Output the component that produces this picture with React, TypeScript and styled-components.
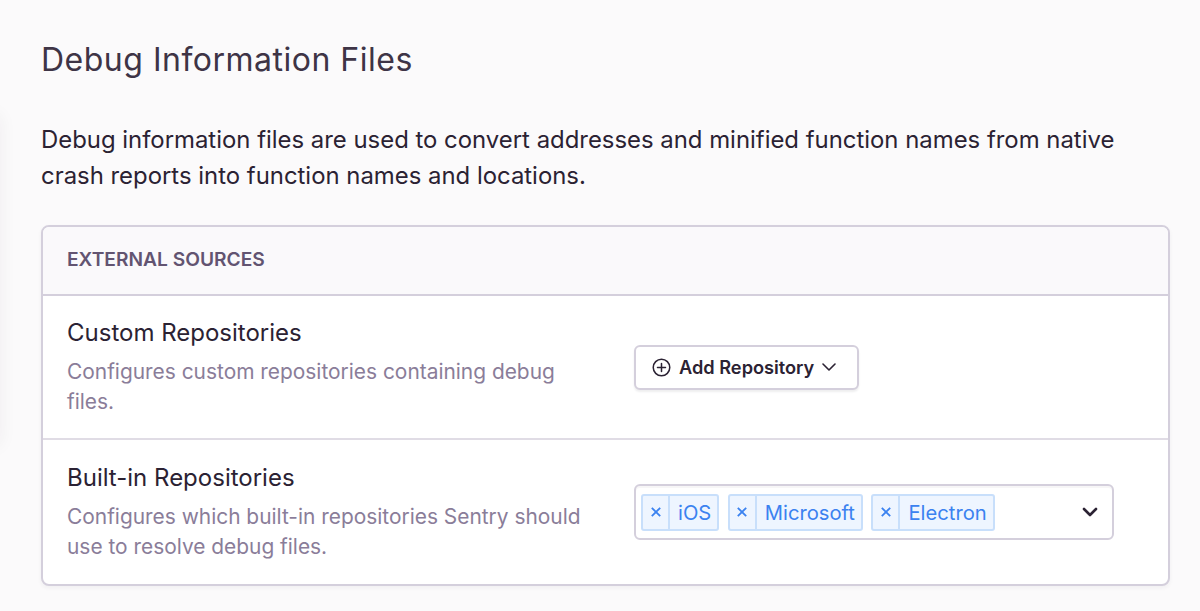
import styled, { createGlobalStyle } from "styled-components"

const Global = createGlobalStyle`
    html, body {
        margin: 0;
        padding: 0;
        background: #fbfafb;
        font-family: 'Inter', sans-serif;
        color: #2b2233;
    }
`

const Page = styled.div`
    position: relative;
    height: 611px;
    overflow: hidden;
    padding: 36px 30px 0 41px;
    box-sizing: border-box;

    &::before {
        content: '';
        position: absolute;
        left: -20px;
        top: 115px;
        width: 20px;
        height: 330px;
        box-shadow: 0 0 18px rgba(43, 34, 51, 0.06);
    }
`

const Title = styled.h1`
    margin: 0;
    font-size: 32px;
    line-height: 48px;
    font-weight: 400;
    letter-spacing: 0.5px;
    color: #3e3446;
`

const Intro = styled.p`
    margin: 38px 0 31px;
    font-size: 23.9px;
    line-height: 36px;
    font-weight: 400;
    color: #2b2233;
`

const Panel = styled.div`
    background: #fff;
    border: 2px solid #d4cfdc;
    border-radius: 8px;
    box-shadow: 0 2px 4px rgba(43, 34, 51, 0.05);
    overflow: hidden;
`

const PanelHeader = styled.div`
    height: 69px;
    box-sizing: border-box;
    display: flex;
    align-items: center;
    padding: 0 24px 4px;
    background: #faf9fb;
    border-bottom: 2px solid #d4cfdc;
    font-size: 19.2px;
    font-weight: 600;
    color: #625471;
    text-transform: uppercase;
`

const Row = styled.div`
    display: flex;
    align-items: center;
    height: 142px;
    padding: 0 54px 0 24px;
    border-bottom: 2px solid #e0dce5;

    &:last-child {
        height: 144px;
        box-sizing: border-box;
        border-bottom: 0;
    }
`

const Label = styled.div`
    width: 567px;
    flex-shrink: 0;
`

const Name = styled.div`
    font-size: 24px;
    line-height: 32px;
    color: #2b2233;
    margin-bottom: 8px;
`

const Help = styled.div`
    width: 520px;
    font-size: 20.9px;
    line-height: 30px;
    color: #8a7d99;
`

const Control = styled.div`
    flex: 1;
    display: flex;
`

const AddButton = styled.button`
    display: flex;
    align-items: center;
    gap: 8px;
    height: 45px;
    padding: 0 21px 0 16px;
    background: #fff;
    border: 2px solid #d4cfdc;
    border-radius: 6px;
    box-shadow: 0 2px 2px rgba(43, 34, 51, 0.08);
    font-family: inherit;
    font-size: 18.2px;
    font-weight: 600;
    color: #2b2233;
`

const Select = styled.div`
    flex: 1;
    height: 56px;
    box-sizing: border-box;
    display: flex;
    align-items: center;
    gap: 8.5px;
    padding: 0 14px 0 5px;
    border: 2px solid #d4cfdc;
    border-radius: 6px;
    box-shadow: inset 0 2px 0 rgba(43, 34, 51, 0.04);
`

const Tag = styled.div`
    display: flex;
    height: 37px;
    box-sizing: border-box;
    border: 2px solid #c8dffb;
    border-radius: 3px;
    background: #eef5ff;
    color: #3b82f0;
    font-size: 20.2px;
`

const TagRemove = styled.span`
    display: flex;
    align-items: center;
    justify-content: center;
    width: 25px;
    border-right: 2px solid #c8dffb;
`

const TagLabel = styled.span`
    display: flex;
    align-items: center;
    padding: 0 6px 0 8px;
`

const Caret = styled.div`
    margin-left: auto;
    display: flex;
`

const tags = ["iOS", "Microsoft", "Electron"]

const App = () => {
    return (
        <Page>
            <Global />
            <Title>Debug Information Files</Title>
            <Intro>
                Debug information files are used to convert addresses and minified function names from native
                crash reports into function names and locations.
            </Intro>
            <Panel>
                <PanelHeader>External Sources</PanelHeader>
                <Row>
                    <Label>
                        <Name>Custom Repositories</Name>
                        <Help>Configures custom repositories containing debug files.</Help>
                    </Label>
                    <Control>
                        <AddButton>
                            <svg width="19" height="19" viewBox="0 0 20 20" fill="none" stroke="#2b2233" strokeWidth="1.6" strokeLinecap="round">
                                <circle cx="10" cy="10" r="8.7" />
                                <path d="M10 5.8v8.4M5.8 10h8.4" />
                            </svg>
                            Add Repository
                            <svg width="14" height="8" viewBox="0 0 14 8" fill="none" stroke="#2b2233" strokeWidth="1.6" strokeLinecap="round" strokeLinejoin="round">
                                <path d="M1 1l6 6 6-6" />
                            </svg>
                        </AddButton>
                    </Control>
                </Row>
                <Row>
                    <Label>
                        <Name>Built-in Repositories</Name>
                        <Help>Configures which built-in repositories Sentry should use to resolve debug files.</Help>
                    </Label>
                    <Control>
                        <Select>
                            {tags.map(tag => (
                                <Tag key={tag}>
                                    <TagRemove>
                                        <svg width="12" height="12" viewBox="0 0 10 10" fill="none" stroke="#3b82f0" strokeWidth="1.5">
                                            <path d="M1.5 1.5l7 7M8.5 1.5l-7 7" />
                                        </svg>
                                    </TagRemove>
                                    <TagLabel>{tag}</TagLabel>
                                </Tag>
                            ))}
                            <Caret>
                                <svg width="16" height="10" viewBox="0 0 16 10" fill="none" stroke="#2b2233" strokeWidth="2.6" strokeLinecap="round" strokeLinejoin="round">
                                    <path d="M2 2l6 6 6-6" />
                                </svg>
                            </Caret>
                        </Select>
                    </Control>
                </Row>
            </Panel>
        </Page>
    )
}

export default App
